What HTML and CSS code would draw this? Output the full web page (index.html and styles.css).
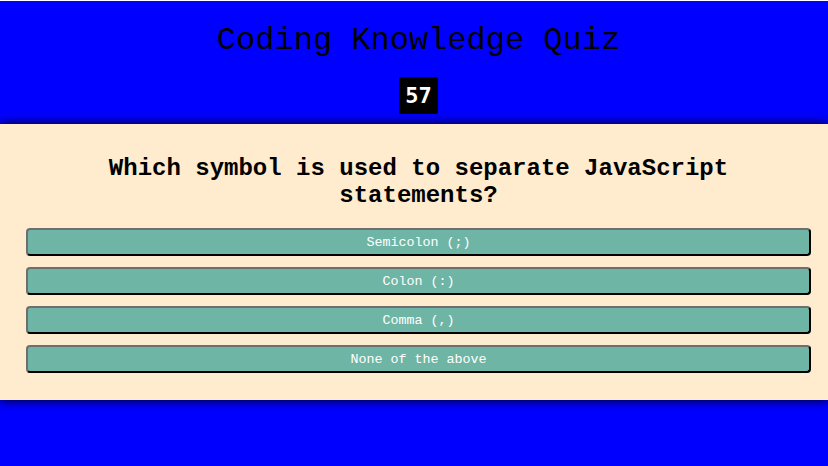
FILE: index.html
```html
<!DOCTYPE html>
<html lang="en">
<head>
<meta charset="utf-8">
<title>Coding Knowledge Quiz</title>
<link rel="stylesheet" href="styles.css">
</head>
<body>
<div class="page">
  <header class="header">
    <h1 class="title">Coding Knowledge Quiz</h1>
    <div class="timer">57</div>
  </header>
  <main class="quiz">
    <h2 class="question">Which symbol is used to separate JavaScript statements?</h2>
    <div class="answers">
      <button class="answer">Semicolon (;)</button>
      <button class="answer">Colon (:)</button>
      <button class="answer">Comma (,)</button>
      <button class="answer">None of the above</button>
    </div>
  </main>
</div>
</body>
</html>
```

FILE: styles.css
```css
html {
  background: #ffffff;
}
body {
  margin: 0;
  padding-top: 1px;
}
.page {
  background: #0000ff;
  min-height: 465px;
}
.header {
  text-align: center;
  padding: 22px 17px 10px 26px;
}
.title {
  margin: 0 0 18px;
  font-family: "Courier New", "Nimbus Mono PS", "Nimbus Mono L", "FreeMono", "Courier 10 Pitch", Courier, "Liberation Mono", monospace;
  font-size: 32px;
  font-weight: normal;
  line-height: 36px;
  color: #000000;
}
.timer {
  display: inline-block;
  background: #000000;
  color: #ffffff;
  font-family: "DejaVu Sans Mono", monospace;
  font-weight: bold;
  font-size: 22px;
  line-height: 25px;
  padding: 6px 6px;
  border-radius: 2px;
}
.quiz {
  position: relative;
  background: #ffebcd;
  box-shadow: 0 0 10px #000000;
  padding: 11px 17px 27px 26px;
}
.question {
  margin: 20px 0 19px;
  text-align: center;
  font-family: "Courier New", "Nimbus Mono PS", "Nimbus Mono L", "FreeMono", "Courier 10 Pitch", Courier, "Liberation Mono", monospace;
  font-size: 24px;
  font-weight: bold;
  line-height: 27px;
  color: #000000;
}
.answers {
  display: flex;
  flex-direction: column;
  gap: 11px;
}
.answer {
  display: block;
  width: 100%;
  height: 28px;
  padding: 0;
  background: #6fb5a6;
  color: #ffffff;
  font-family: "Courier New", "Nimbus Mono PS", "Nimbus Mono L", "FreeMono", "Courier 10 Pitch", Courier, "Liberation Mono", monospace;
  font-size: 13.33px;
  border-style: solid;
  border-width: 2px;
  border-color: #6e6e6e #000000 #000000 #6e6e6e;
  border-radius: 4px;
}
```
